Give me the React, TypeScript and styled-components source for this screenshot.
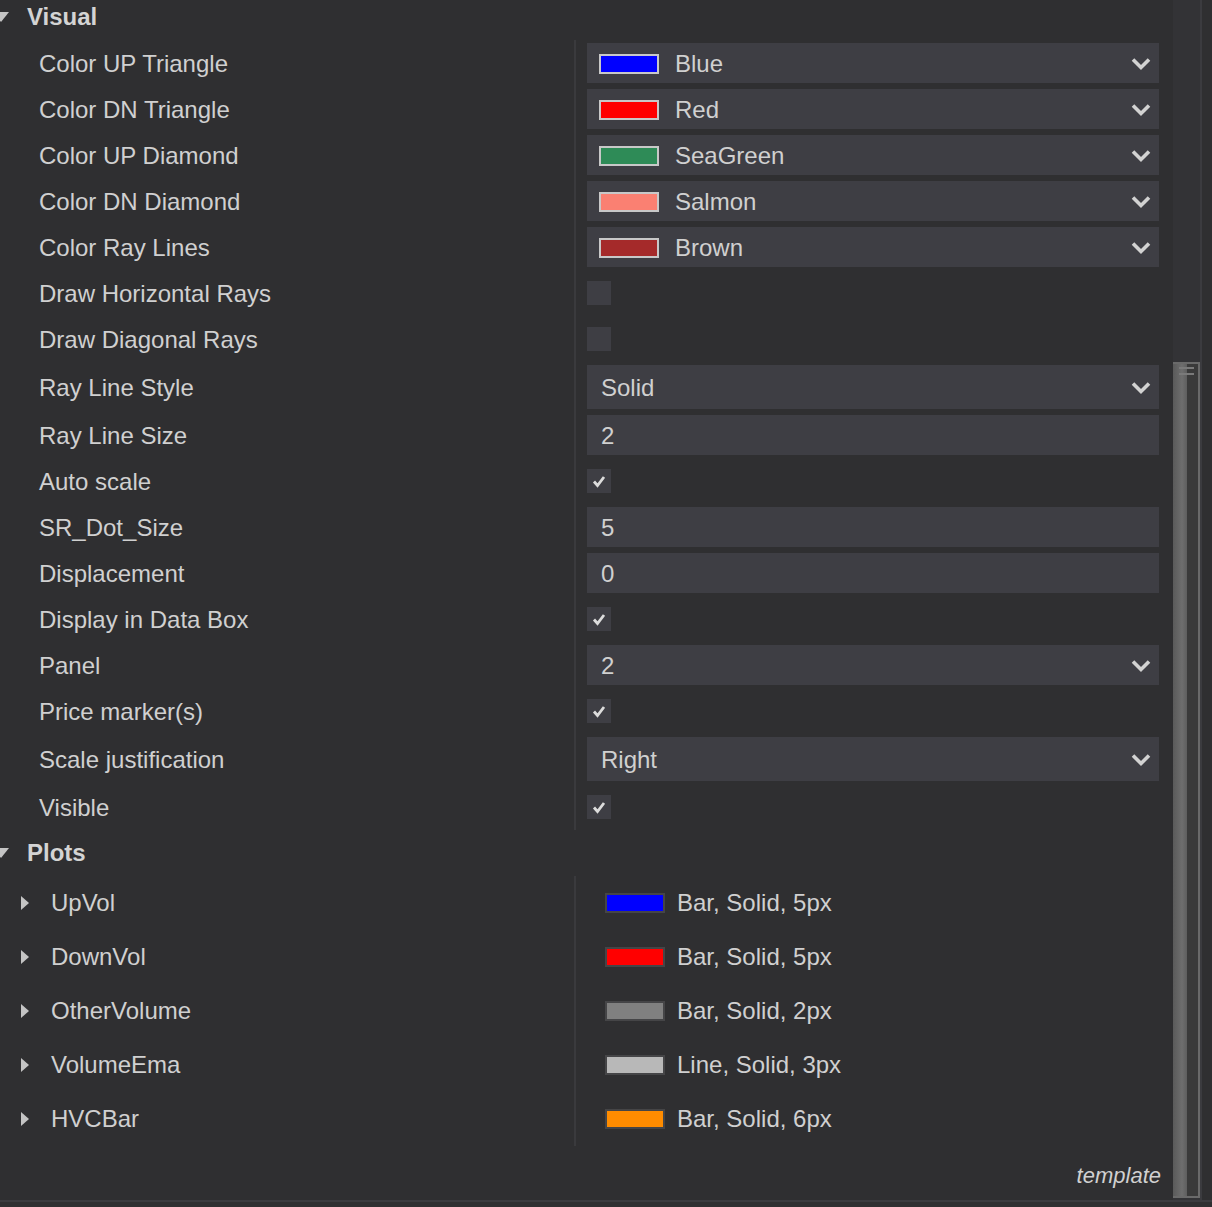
import styled, { createGlobalStyle } from "styled-components";

const GlobalStyle = createGlobalStyle`
  body {
    margin: 0;
    background: #2f2f31;
    font-family: "Liberation Sans", Arial, sans-serif;
  }
`;

const Page = styled.div`
  width: 1212px;
  height: 1207px;
  display: flex;
  flex-direction: column;
  background: #2f2f31;
  overflow: hidden;
  color: #d0d0d0;
`;

const Main = styled.div`
  display: flex;
  height: 1200px;
`;

const Panel = styled.div`
  width: 1173px;
  display: flex;
  flex-direction: column;
  overflow: hidden;
`;

const Track = styled.div`
  width: 27px;
  background: #333336;
  display: flex;
  flex-direction: column;
`;

const Thumb = styled.div`
  flex: 1;
  margin: 362px 0 2px 0;
  border: 2px solid #6a6a6a;
  border-left: none;
  background: linear-gradient(to right, #5a5a5a 0, #6e6e6e 9px, #5e5e5e 14px, #3a3a3a 14px);
`;

const Grip = styled.div`
  margin: 3px 4px 0 6px;
  height: 4px;
  border-top: 2px solid #7a7a7a;
  border-bottom: 2px solid #7a7a7a;
`;

const Edge = styled.div`
  width: 2px;
  background: #3b3b3f;
`;

const BottomLine = styled.div`
  height: 2px;
  background: #3b3b3f;
`;

const SectionHeader = styled.div<{ $first?: boolean }>`
  height: 46px;
  flex-shrink: 0;
  margin-top: ${(p) => (p.$first ? "-6px" : "0")};
  display: flex;
  align-items: center;
  gap: 18px;
  margin-left: -7px;
  font-size: 24px;
  font-weight: bold;
  color: #d4d4d4;
`;

const DownTri = styled.span`
  width: 0;
  height: 0;
  border-left: 8px solid transparent;
  border-right: 8px solid transparent;
  border-top: 10px solid #c4c4c4;
`;

const RightTri = styled.span`
  width: 0;
  height: 0;
  border-top: 7px solid transparent;
  border-bottom: 7px solid transparent;
  border-left: 8px solid #c4c4c4;
`;

const Row = styled.div<{ $h: number }>`
  display: grid;
  grid-template-columns: 574px 1fr;
  height: ${(p) => p.$h}px;
  flex-shrink: 0;
  font-size: 24px;
`;

const Label = styled.div`
  display: flex;
  align-items: center;
  padding-left: 39px;
  padding-top: 1px;
  white-space: nowrap;
`;

const PlotLabel = styled.div`
  display: flex;
  align-items: center;
  padding-left: 21px;
  gap: 22px;
  white-space: nowrap;
`;

const Cell = styled.div<{ $pad?: number }>`
  border-left: 2px solid #3a3a3d;
  display: flex;
  align-items: center;
  padding: 0 14px 0 ${(p) => p.$pad ?? 11}px;
`;

const Field = styled.div<{ $tall?: boolean; $swatch?: boolean }>`
  flex: 1;
  height: ${(p) => (p.$tall ? 44 : 40)}px;
  background: #3e3e44;
  display: flex;
  align-items: center;
  padding: 1px 8px 0 ${(p) => (p.$swatch ? 12 : 14)}px;
  gap: 16px;
  box-sizing: border-box;
`;

const FieldText = styled.span`
  flex: 1;
`;

const Swatch = styled.span<{ $c: string; $dark?: boolean }>`
  width: 56px;
  height: 16px;
  background: ${(p) => p.$c};
  border: 2px solid ${(p) => (p.$dark ? "#454547" : "#c8c8c8")};
  flex-shrink: 0;
`;

const Box = styled.span`
  width: 24px;
  height: 24px;
  background: #3e3e44;
  display: flex;
  align-items: center;
  justify-content: center;
`;

const PlotValue = styled.span`
  display: flex;
  align-items: center;
  gap: 12px;
  white-space: nowrap;
`;

const Footer = styled.div`
  flex: 1;
  display: flex;
  justify-content: flex-end;
  align-items: flex-end;
  padding: 0 12px 11px 0;
  font-size: 22px;
  font-style: italic;
  color: #d0d0d0;
`;

const Chevron = () => (
  <svg width="20" height="14" viewBox="0 0 20 14">
    <polyline points="2,2.5 10,10.5 18,2.5" fill="none" stroke="#d2d2d2" strokeWidth="3.6" />
  </svg>
);

const Check = () => (
  <svg width="14" height="14" viewBox="0 0 14 14">
    <polyline points="2,7.5 5.5,11.5 12,3" fill="none" stroke="#dcdcdc" strokeWidth="2.8" />
  </svg>
);

type Item =
  | { label: string; kind: "color"; color: string; value: string }
  | { label: string; kind: "select"; value: string; tall?: boolean }
  | { label: string; kind: "input"; value: string }
  | { label: string; kind: "check"; checked: boolean };

const visual: Item[] = [
  { label: "Color UP Triangle", kind: "color", color: "#0000ff", value: "Blue" },
  { label: "Color DN Triangle", kind: "color", color: "#ff0000", value: "Red" },
  { label: "Color UP Diamond", kind: "color", color: "#2e8b57", value: "SeaGreen" },
  { label: "Color DN Diamond", kind: "color", color: "#fa8072", value: "Salmon" },
  { label: "Color Ray Lines", kind: "color", color: "#a52a2a", value: "Brown" },
  { label: "Draw Horizontal Rays", kind: "check", checked: false },
  { label: "Draw Diagonal Rays", kind: "check", checked: false },
  { label: "Ray Line Style", kind: "select", value: "Solid", tall: true },
  { label: "Ray Line Size", kind: "input", value: "2" },
  { label: "Auto scale", kind: "check", checked: true },
  { label: "SR_Dot_Size", kind: "input", value: "5" },
  { label: "Displacement", kind: "input", value: "0" },
  { label: "Display in Data Box", kind: "check", checked: true },
  { label: "Panel", kind: "select", value: "2" },
  { label: "Price marker(s)", kind: "check", checked: true },
  { label: "Scale justification", kind: "select", value: "Right", tall: true },
  { label: "Visible", kind: "check", checked: true },
];

const plots = [
  { name: "UpVol", color: "#0000ff", desc: "Bar, Solid, 5px" },
  { name: "DownVol", color: "#ff0000", desc: "Bar, Solid, 5px" },
  { name: "OtherVolume", color: "#808080", desc: "Bar, Solid, 2px" },
  { name: "VolumeEma", color: "#b8b8b8", desc: "Line, Solid, 3px" },
  { name: "HVCBar", color: "#ff8c00", desc: "Bar, Solid, 6px" },
];

function Control({ item }: { item: Item }) {
  switch (item.kind) {
    case "color":
      return (
        <Field $swatch>
          <Swatch $c={item.color} />
          <FieldText>{item.value}</FieldText>
          <Chevron />
        </Field>
      );
    case "select":
      return (
        <Field $tall={item.tall}>
          <FieldText>{item.value}</FieldText>
          <Chevron />
        </Field>
      );
    case "input":
      return (
        <Field>
          <FieldText>{item.value}</FieldText>
        </Field>
      );
    default:
      return <Box>{item.checked && <Check />}</Box>;
  }
}

export default function App() {
  return (
    <Page>
      <GlobalStyle />
      <Main>
        <Panel>
          <SectionHeader $first>
            <DownTri />
            Visual
          </SectionHeader>
          {visual.map((item) => (
            <Row key={item.label} $h={item.kind === "select" && item.tall ? 50 : 46}>
              <Label>{item.label}</Label>
              <Cell>
                <Control item={item} />
              </Cell>
            </Row>
          ))}
          <SectionHeader>
            <DownTri />
            Plots
          </SectionHeader>
          {plots.map((p) => (
            <Row key={p.name} $h={54}>
              <PlotLabel>
                <RightTri />
                {p.name}
              </PlotLabel>
              <Cell $pad={29}>
                <PlotValue>
                  <Swatch $c={p.color} $dark />
                  {p.desc}
                </PlotValue>
              </Cell>
            </Row>
          ))}
          <Footer>template</Footer>
        </Panel>
        <Track>
          <Thumb>
            <Grip />
          </Thumb>
        </Track>
        <Edge />
      </Main>
      <BottomLine />
    </Page>
  );
}
